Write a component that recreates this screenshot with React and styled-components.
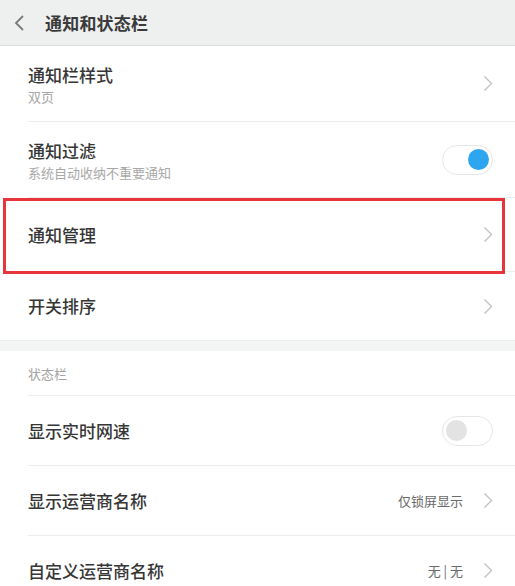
import React from 'react'
import styled, { createGlobalStyle } from 'styled-components'

const GlobalStyle = createGlobalStyle`
  html, body {
    margin: 0;
    padding: 0;
    background: #ffffff;
    overflow: hidden;
  }
  body {
    font-family: "Noto Sans CJK SC", "Noto Sans", sans-serif;
    color: #333;
  }
`

const Page = styled.div`
  width: 515px;
  height: 586px;
  overflow: hidden;
  background: #fff;
`

const Header = styled.div`
  height: 46px;
  display: flex;
  align-items: center;
  background: #eef0f0;
  border-bottom: 1px solid #dcdede;
  box-sizing: border-box;
`

const BackButton = styled.div`
  width: 45px;
  display: flex;
  justify-content: center;
  padding-right: 6px;
  box-sizing: border-box;
`

const HeaderTitle = styled.div`
  font-size: 17px;
  font-weight: 700;
  color: #3a3a3a;
  letter-spacing: 0.2px;
`

const Section = styled.div`
  background: #fff;
`

const Gap = styled.div`
  height: 10px;
  background: #f3f4f4;
  border-top: 1px solid #eceded;
`

const SectionLabel = styled.div`
  height: 45px;
  margin-left: 28px;
  display: flex;
  align-items: center;
  font-size: 13px;
  color: #a4a4a4;
  border-bottom: 1px solid #ececec;
  box-sizing: border-box;
`

const Row = styled.div`
  position: relative;
  height: ${(p) => p.$h}px;
  margin-left: 28px;
  padding-right: 22px;
  display: flex;
  align-items: center;
  justify-content: space-between;
  border-bottom: ${(p) => (p.$last ? 'none' : '1px solid #ececec')};
  box-sizing: border-box;
`

const TextBlock = styled.div`
  display: flex;
  flex-direction: column;
  gap: 3px;
  padding-top: 2px;
`

const Title = styled.div`
  font-size: 17px;
  font-weight: 500;
  color: #363636;
  line-height: 22px;
`

const Subtitle = styled.div`
  font-size: 13px;
  color: #a8a8a8;
  line-height: 16px;
`

const Trailing = styled.div`
  display: flex;
  align-items: center;
  gap: 20px;
`

const Value = styled.div`
  font-size: 13px;
  color: #6a6a6a;
`

const Toggle = styled.div`
  width: 51px;
  height: 30px;
  border-radius: 15px;
  border: 1.5px solid #e6e6e6;
  background: #fff;
  box-sizing: border-box;
  display: flex;
  align-items: center;
  justify-content: ${(p) => (p.$on ? 'flex-end' : 'flex-start')};
  padding: 0 3px;
`

const Knob = styled.div`
  width: 21px;
  height: 21px;
  border-radius: 50%;
  background: ${(p) => (p.$on ? '#2ea6ef' : '#e3e3e3')};
`

const Highlight = styled.div`
  position: absolute;
  left: -25px;
  right: 10px;
  top: 0;
  bottom: -3px;
  border: 3px solid #e8343b;
  pointer-events: none;
`

const Chevron = () => (
  <svg width="10" height="17" viewBox="0 0 10 17">
    <path d="M1.5 1.5 L8.5 8.5 L1.5 15.5" fill="none" stroke="#c2c2c2" strokeWidth="1.4" />
  </svg>
)

const BackIcon = () => (
  <svg width="11" height="16" viewBox="0 0 11 16">
    <path d="M9 1 L2 8 L9 15" fill="none" stroke="#7a7a7a" strokeWidth="1.8" />
  </svg>
)

const App = () => {
  return (
    <Page>
      <GlobalStyle />
      <Header>
        <BackButton>
          <BackIcon />
        </BackButton>
        <HeaderTitle>通知和状态栏</HeaderTitle>
      </Header>

      <Section>
        <Row $h={76}>
          <TextBlock>
            <Title>通知栏样式</Title>
            <Subtitle>双页</Subtitle>
          </TextBlock>
          <Chevron />
        </Row>
        <Row $h={76}>
          <TextBlock>
            <Title>通知过滤</Title>
            <Subtitle>系统自动收纳不重要通知</Subtitle>
          </TextBlock>
          <Toggle $on>
            <Knob $on />
          </Toggle>
        </Row>
        <Row $h={74}>
          <Title>通知管理</Title>
          <Chevron />
          <Highlight />
        </Row>
        <Row $h={68} $last>
          <Title>开关排序</Title>
          <Chevron />
        </Row>
      </Section>

      <Gap />

      <Section>
        <SectionLabel>状态栏</SectionLabel>
        <Row $h={70}>
          <Title>显示实时网速</Title>
          <Toggle>
            <Knob />
          </Toggle>
        </Row>
        <Row $h={70}>
          <Title>显示运营商名称</Title>
          <Trailing>
            <Value>仅锁屏显示</Value>
            <Chevron />
          </Trailing>
        </Row>
        <Row $h={70}>
          <Title>自定义运营商名称</Title>
          <Trailing>
            <Value>无 | 无</Value>
            <Chevron />
          </Trailing>
        </Row>
      </Section>
    </Page>
  )
}

export default App
